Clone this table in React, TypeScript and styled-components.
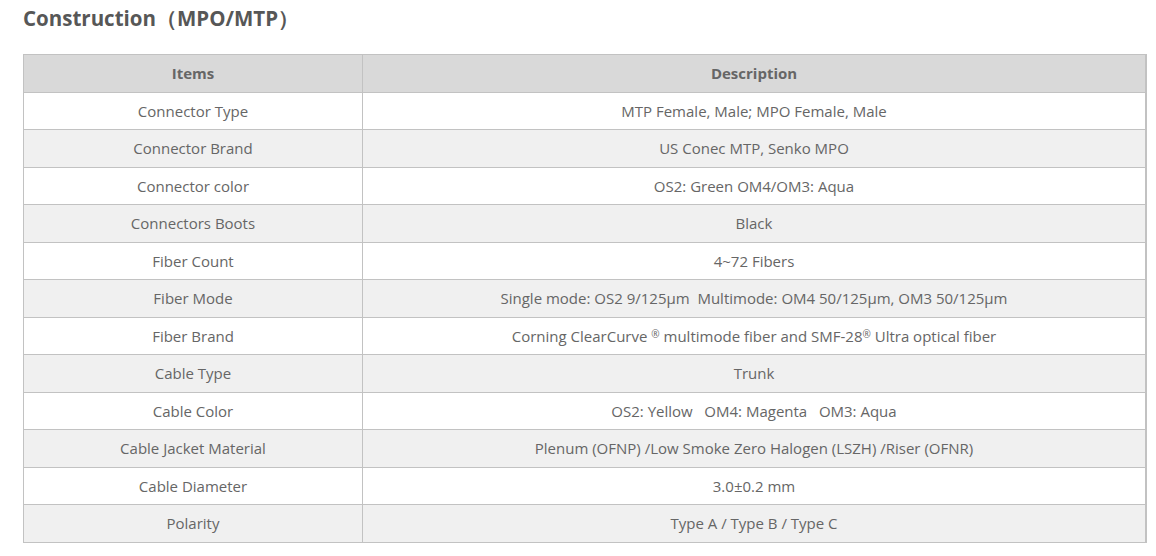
import React from "react";
import styled, { createGlobalStyle } from "styled-components";

const Global = createGlobalStyle`
  html, body { margin: 0; padding: 0; background: #ffffff; }
  body { font-family: "Open Sans", "Noto Sans", sans-serif; }
`;

const Page = styled.div`
  padding: 4px 9px 0 23px;
`;

const Title = styled.h2`
  margin: 0 0 22px 0;
  font-size: 20.5px;
  font-weight: 700;
  color: #575757;
  line-height: 28px;
`;

const Table = styled.table`
  width: 100%;
  border-collapse: collapse;
  border: 1px solid #c2c2c2;
  border-right-width: 2px;
  table-layout: fixed;
`;

const HeadCell = styled.th<{ $w?: number }>`
  background: #d9d9d9;
  color: #666666;
  font-weight: 700;
  font-size: 15px;
  height: 36.5px;
  padding: 0 8px;
  border: 1px solid #c2c2c2;
  text-align: center;
  ${(p) => (p.$w ? `width: ${p.$w}px;` : "")}
`;

const Row = styled.tr<{ $alt: boolean }>`
  background: ${(p) => (p.$alt ? "#f0f0f0" : "#ffffff")};
`;

const Cell = styled.td`
  color: #666666;
  font-size: 15px;
  height: 36.5px;
  padding: 0 8px;
  border: 1px solid #c2c2c2;
  text-align: center;
  white-space: pre;
`;

const Reg = styled.span`
  font-size: 10px;
  vertical-align: 4px;
  line-height: 0;
`;

const rows: [string, React.ReactNode][] = [
  ["Connector Type", "MTP Female, Male; MPO Female, Male"],
  ["Connector Brand", "US Conec MTP, Senko MPO"],
  ["Connector color", "OS2: Green OM4/OM3: Aqua"],
  ["Connectors Boots", "Black"],
  ["Fiber Count", "4~72 Fibers"],
  ["Fiber Mode", "Single mode: OS2 9/125µm  Multimode: OM4 50/125µm, OM3 50/125µm"],
  [
    "Fiber Brand",
    <>
      Corning ClearCurve <Reg>®</Reg> multimode fiber and SMF-28<Reg>®</Reg> Ultra optical fiber
    </>,
  ],
  ["Cable Type", "Trunk"],
  ["Cable Color", "OS2: Yellow   OM4: Magenta   OM3: Aqua"],
  ["Cable Jacket Material", "Plenum (OFNP) /Low Smoke Zero Halogen (LSZH) /Riser (OFNR)"],
  ["Cable Diameter", "3.0±0.2 mm"],
  ["Polarity", "Type A / Type B / Type C"],
];

export default function App() {
  return (
    <>
      <Global />
      <Page>
        <Title>Construction（MPO/MTP）</Title>
        <Table>
          <thead>
            <tr>
              <HeadCell $w={322}>Items</HeadCell>
              <HeadCell>Description</HeadCell>
            </tr>
          </thead>
          <tbody>
            {rows.map(([k, v], i) => (
              <Row key={k} $alt={i % 2 === 1}>
                <Cell>{k}</Cell>
                <Cell>{v}</Cell>
              </Row>
            ))}
          </tbody>
        </Table>
      </Page>
    </>
  );
}
